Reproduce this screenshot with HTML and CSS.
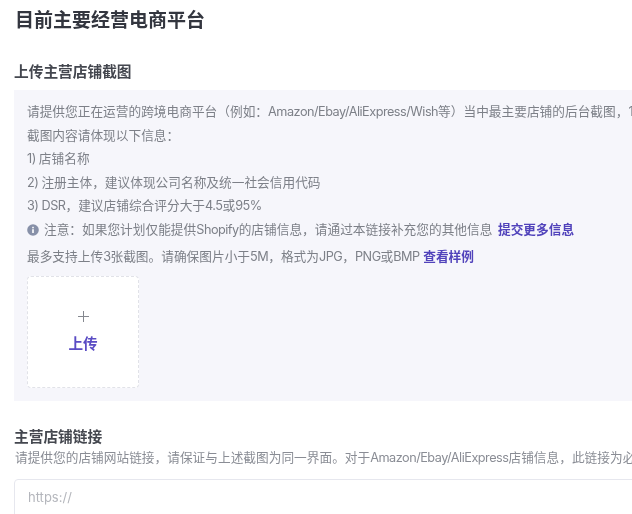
FILE: index.html
```html
<!DOCTYPE html>
<html lang="zh">
<head>
<meta charset="utf-8">
<title>目前主要经营电商平台</title>
<link rel="stylesheet" href="styles.css">
</head>
<body>
<main class="page">
  <h1 class="title">目前主要经营电商平台</h1>
  <h2 class="section-title first">上传主营店铺截图</h2>
  <section class="panel">
    <p class="line">请提供您正在运营的跨境电商平台（例如：<span class="en">Amazon/Ebay/AliExpress/Wish</span>等）当中最主要店铺的后台截图，1</p>
    <p class="line">截图内容请体现以下信息：</p>
    <p class="line"><span class="en">1) </span>店铺名称</p>
    <p class="line"><span class="en">2) </span>注册主体，建议体现公司名称及统一社会信用代码</p>
    <p class="line"><span class="en">3) DSR</span>，建议店铺综合评分大于<span class="en">4.5</span>或<span class="en">95%</span></p>
    <p class="line"><svg class="info" viewBox="0 0 12 12" aria-hidden="true"><circle cx="6" cy="6" r="5.8" fill="#8790a8"/><rect x="5.2" y="5.2" width="1.6" height="3.8" fill="#fff"/><rect x="5.2" y="2.8" width="1.6" height="1.5" fill="#fff"/></svg>注意：如果您计划仅能提供<span class="en">Shopify</span>的店铺信息，请通过本链接补充您的其他信息 <a class="link spaced">提交更多信息</a></p>
    <p class="line gap">最多支持上传<span class="en">3</span>张截图。请确保图片小于<span class="en">5M</span>，格式为<span class="en">JPG</span>，<span class="en">PNG</span>或<span class="en">BMP</span> <a class="link">查看样例</a></p>
    <div class="upload">
      <svg class="plus" viewBox="0 0 13 13" aria-hidden="true"><path d="M6.5 1v11M1 6.5h11" stroke="#85888f" stroke-width="1" fill="none"/></svg>
      <span class="upload-label">上传</span>
    </div>
  </section>
  <h2 class="section-title second">主营店铺链接</h2>
  <p class="desc">请提供您的店铺网站链接，请保证与上述截图为同一界面。对于<span class="en">Amazon/Ebay/AliExpress</span>店铺信息，此链接为必填</p>
  <div class="input">https://</div>
</main>
</body>
</html>
```
FILE: styles.css
```css
html, body {
  margin: 0;
  height: 100%;
  overflow: hidden;
  background: #fff;
}
.page {
  width: 640px;
  padding-left: 14px;
  font-family: Inter, "Noto Sans CJK SC", sans-serif;
  color: #7d8088;
  filter: blur(0.45px);
}
.title {
  margin: 0;
  padding: 9px 0 0 1px;
  font-size: 19px;
  line-height: 24px;
  font-weight: 600;
  color: #33363f;
}
.section-title {
  margin: 0;
  font-size: 14.7px;
  line-height: 20px;
  font-weight: 600;
  color: #44474f;
  white-space: nowrap;
}
.section-title.first {
  padding-top: 29px;
}
.panel {
  margin-top: 8px;
  padding: 10px 0 13px 13px;
  height: 288px;
  background: #f6f6fb;
  overflow: hidden;
}
.line {
  margin: 0;
  font-size: 12.7px;
  line-height: 23.5px;
  white-space: nowrap;
}
.en {
  letter-spacing: -0.5px;
}
.line.gap {
  margin-top: 4px;
}
.info {
  width: 12px;
  height: 12px;
  margin-right: 5px;
  vertical-align: -2px;
}
.link {
  color: #5143bb;
  font-weight: 600;
}
.link.spaced {
  margin-left: 2px;
}
.upload {
  margin-top: 7px;
  box-sizing: border-box;
  width: 112px;
  height: 112px;
  display: flex;
  flex-direction: column;
  align-items: center;
  justify-content: center;
  gap: 11px;
  background: #fff;
  border: 1px dashed #e1e2e8;
  border-radius: 4px;
}
.plus {
  width: 13px;
  height: 13px;
}
.upload-label {
  font-size: 14.6px;
  line-height: 20px;
  font-weight: 600;
  color: #5a4cc4;
}
.section-title.second {
  margin-top: 26px;
}
.desc {
  margin: 1px 0 0 1px;
  font-size: 12.7px;
  line-height: 20px;
  white-space: nowrap;
  color: #8a8d95;
}
.input {
  margin-top: 11px;
  box-sizing: border-box;
  height: 42px;
  padding: 7px 13px;
  font-size: 13px;
  line-height: 20px;
  color: #b4b6bc;
  border: 1px solid #e6e7ee;
  border-radius: 4px;
}
```
